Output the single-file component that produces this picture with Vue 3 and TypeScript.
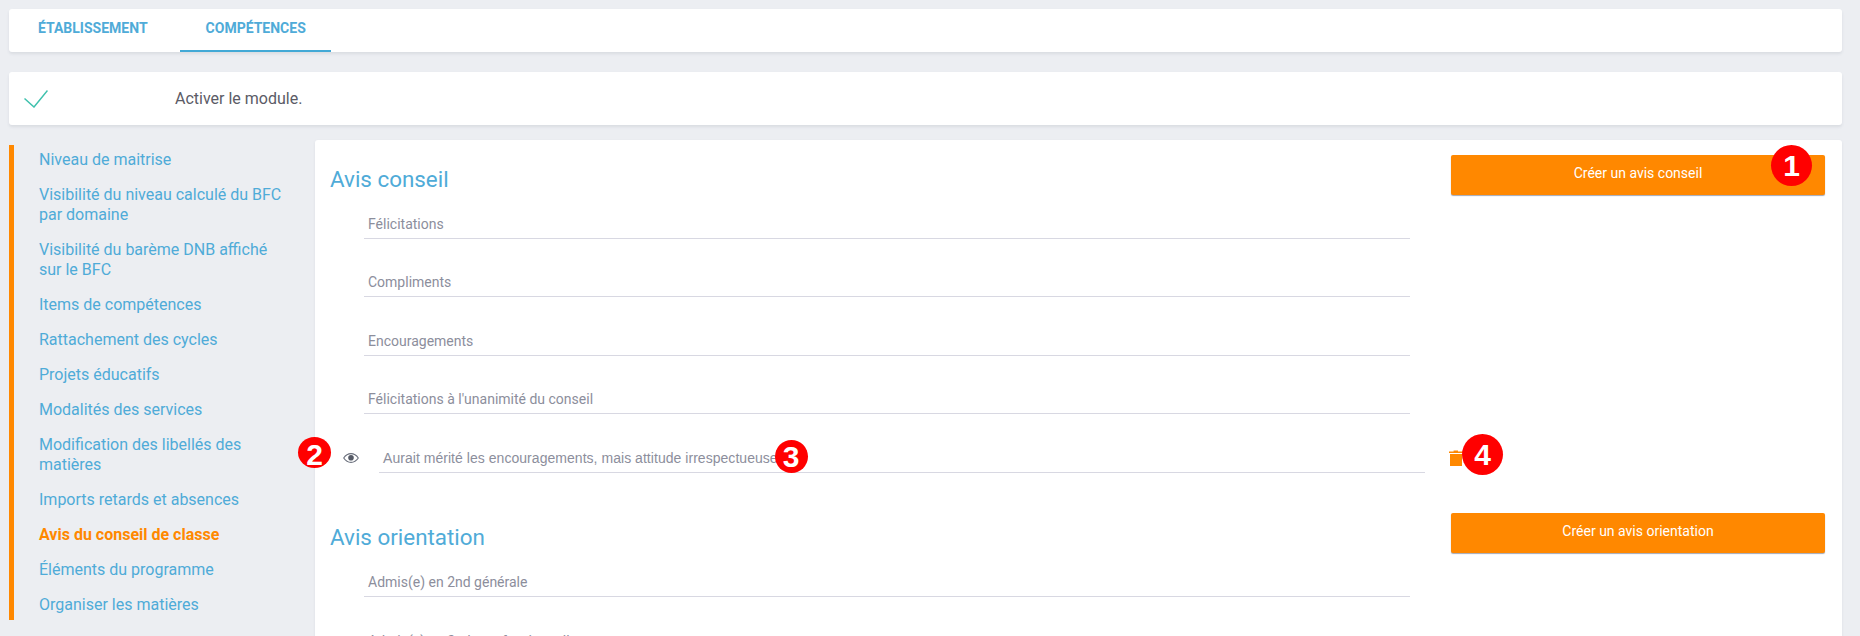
<script setup lang="ts">
const menu: { label: string; active?: boolean }[] = [
  { label: 'Niveau de maitrise' },
  { label: 'Visibilité du niveau calculé du BFC par domaine' },
  { label: 'Visibilité du barème DNB affiché sur le BFC' },
  { label: 'Items de compétences' },
  { label: 'Rattachement des cycles' },
  { label: 'Projets éducatifs' },
  { label: 'Modalités des services' },
  { label: 'Modification des libellés des matières' },
  { label: 'Imports retards et absences' },
  { label: 'Avis du conseil de classe', active: true },
  { label: 'Éléments du programme' },
  { label: 'Organiser les matières' },
]
const conseil = ['Félicitations', 'Compliments', 'Encouragements', "Félicitations à l'unanimité du conseil"]
const orientation = ['Admis(e) en 2nd générale', 'Admis(e) en 2nde professionnelle']
</script>

<template>
  <div class="page">
    <div class="tabs">
      <div class="tab">ÉTABLISSEMENT</div>
      <div class="tab active">COMPÉTENCES</div>
    </div>

    <div class="module">
      <svg class="check" width="24" height="18" viewBox="0 0 24 18" fill="none">
        <path d="M0.5 8.5 L10 17 L23.5 0.5" stroke="#3fc1ad" stroke-width="1.5" />
      </svg>
      <span class="module-label">Activer le module.</span>
    </div>

    <div class="content">
      <nav class="side">
        <a v-for="m in menu" :key="m.label" class="link" :class="{ on: m.active }">{{ m.label }}</a>
      </nav>

      <main class="card">
        <section class="section">
          <div class="col">
            <h2 class="title">Avis conseil</h2>
            <div class="list">
              <div v-for="r in conseil" :key="r" class="row">{{ r }}</div>
              <div class="custom">
                <span class="badge b2">2</span>
                <svg class="eye" width="16" height="10" viewBox="0 0 16 10" fill="none">
                  <path d="M0.7 5 C3 1.6 5.4 0.6 8 0.6 C10.6 0.6 13 1.6 15.3 5 C13 8.4 10.6 9.4 8 9.4 C5.4 9.4 3 8.4 0.7 5 Z" stroke="#6a6f7c" stroke-width="1.1" />
                  <circle cx="8" cy="4.8" r="2.8" fill="#555a66" />
                </svg>
                <div class="row field">
                  <span class="field-text">Aurait mérité les encouragements, mais attitude irrespectueuse<span class="badge b3">3</span></span>
                </div>
                <svg class="trash" width="14" height="16" viewBox="0 0 14 16">
                  <path fill="#ff8800" d="M0 1.5h4.6V.4h4.4V1.5H14v1.6H0zM1 4h12v12H1z" />
                </svg>
                <span class="badge b4">4</span>
              </div>
            </div>
          </div>
          <button class="btn">Créer un avis conseil<span class="badge b1">1</span></button>
        </section>

        <section class="section second">
          <div class="col">
            <h2 class="title">Avis orientation</h2>
            <div class="list">
              <div v-for="r in orientation" :key="r" class="row">{{ r }}</div>
            </div>
          </div>
          <button class="btn">Créer un avis orientation</button>
        </section>
      </main>
    </div>
  </div>
</template>

<style>
html, body { margin: 0; background: #ebecf1; overflow: hidden; }
</style>

<style scoped>
.page {
  box-sizing: border-box;
  height: 636px;
  overflow: hidden;
  padding: 9px 18px 0 9px;
  background: #eceef2;
  font-family: Roboto, "Liberation Sans", sans-serif;
}
.tabs {
  display: flex;
  gap: 6px;
  height: 43px;
  padding-left: 3px;
  margin-bottom: 20px;
  background: #fff;
  border-radius: 3px;
  box-shadow: 0 2px 3px rgba(60, 65, 90, 0.1);
}
.tab {
  box-sizing: border-box;
  padding: 0 26px;
  height: 43px;
  line-height: 39px;
  font-size: 14px;
  font-weight: 700;
  color: #4fabd8;
  white-space: nowrap;
}
.tab.active { padding-right: 25px; border-bottom: 2px solid #42a9d6; }
.module {
  display: flex;
  align-items: center;
  height: 53px;
  margin-bottom: 15px;
  background: #fff;
  border-radius: 3px;
  box-shadow: 0 2px 3px rgba(60, 65, 90, 0.1);
}
.check { margin-left: 15px; }
.module-label {
  margin-left: 127px;
  font-size: 16px;
  color: #5b5b66;
}
.content {
  display: flex;
  align-items: flex-start;
}
.side {
  box-sizing: border-box;
  flex: none;
  display: flex;
  flex-direction: column;
  gap: 15px;
  width: 306px;
  height: 475px;
  margin-top: 5px;
  padding: 5px 24px 0 25px;
  border-left: 5px solid #ff8800;
  background: transparent;
}
.link {
  font-size: 16px;
  line-height: 20px;
  color: #4fabd8;
}
.link.on { color: #ff8800; font-weight: 700; }
.card {
  flex: 1;
  box-sizing: border-box;
  height: 560px;
  padding: 15px 17px 0 15px;
  background: #fff;
  border-radius: 3px;
  box-shadow: 0 1px 3px rgba(60, 65, 90, 0.08);
}
.section { display: flex; align-items: flex-start; }
.section.second { margin-top: 40px; }
.second .list { gap: 30px; }
.col { flex: 1; min-width: 0; }
.title {
  margin: 0;
  height: 48px;
  font-size: 22.4px;
  font-weight: 400;
  line-height: 49px;
  color: #4fabd8;
}
.list {
  display: flex;
  flex-direction: column;
  gap: 29.4px;
  margin-top: 7px;
  padding: 0 41px 0 34px;
}
.row {
  box-sizing: border-box;
  height: 29px;
  line-height: 28px;
  padding-left: 4px;
  font-size: 14px;
  color: #8c8e9c;
  border-bottom: 1px solid #d8d8e2;
}
.custom {
  position: relative;
  display: flex;
  align-items: flex-start;
  height: 29px;
  margin: 0 -56px 0 -21px;
}
.eye { flex: none; margin: 9px 20px 0 0; }
.field {
  flex: none;
  width: 1046px;
  font-family: "Liberation Sans", Arial, sans-serif;
  letter-spacing: 0.04px;
}
.field-text { position: relative; }
.trash { flex: none; margin: 6px 0 0 24px; }
.btn {
  position: relative;
  flex: none;
  width: 374px;
  height: 40px;
  padding: 0 0 4px;
  border: 0;
  border-radius: 2px;
  background: #ff8800;
  box-shadow: 0 1px 1px rgba(50, 60, 90, 0.45);
  color: #fff;
  font: 400 14px Roboto, "Liberation Sans", sans-serif;
}
.badge {
  position: absolute;
  display: block;
  border-radius: 50%;
  background: #f00;
  color: #fff;
  font: 700 30px/41px "Liberation Sans", sans-serif;
  text-align: center;
  width: 41px;
  height: 41px;
}
.b1 { left: 320px; top: -10px; }
.b2 { left: -45px; top: -7px; width: 33px; height: 31px; line-height: 36px; }
.b3 { left: 100%; top: -10px; width: 33px; height: 33px; line-height: 33px; margin-left: -3px; }
.b4 { left: 1119px; top: -10px; }
</style>
